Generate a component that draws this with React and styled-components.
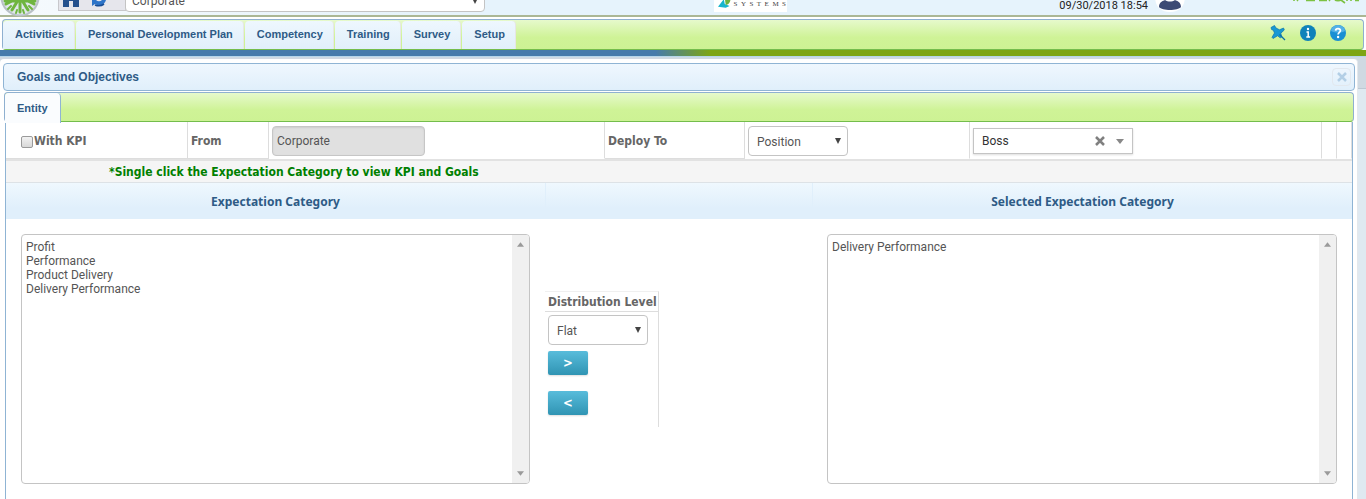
import React from "react";
import styled, { createGlobalStyle } from "styled-components";

const arial = `"Liberation Sans", Arial, sans-serif`;
const bodyFont = `Roboto, Tahoma, sans-serif`;
const headFont = `"Noto Sans", Tahoma, sans-serif`;
const labelFont = `"DejaVu Sans Condensed", "DejaVu Sans", Tahoma, sans-serif`;

const Global = createGlobalStyle`
  * { box-sizing: border-box; }
  body { margin: 0; background: #dfe9f1; font: 12px/16px ${bodyFont}; color: #555; }
  button, select, input { font: inherit; color: inherit; }
  svg { display: block; }
`;

/* ---------- top bar ---------- */
const TopBar = styled.header`
  display: flex; align-items: flex-end; height: 17px; overflow: hidden;
  background: linear-gradient(transparent 15px, #abb795 15px), linear-gradient(90deg, #f6fafd, #e6f3fc 30%);
`;
const TopLeft = styled.div`display: flex; align-items: flex-end; flex: 714;`;
const TopRight = styled.div`display: flex; align-items: flex-end; flex: 579;`;
const Quick = styled.nav`
  display: flex; gap: 12px; align-items: flex-end; width: 68px; height: 26px; margin: 0 0 6px 18px; padding: 0 0 3px 3px;
  background: #e6e6ec; border: 1px solid #c8c8cc;
`;
const IconButton = styled.button`display: flex; padding: 0; border: 0; background: none;`;
const EntityPicker = styled.div`width: 360px; margin: 0 0 5px -1px;`;
const Logo = styled.div`
  display: flex; align-items: flex-end; width: 73px; height: 24px; margin-bottom: 5px; padding: 0 1px 4px 4px; background: #fff;
  font: 7px/8px "Liberation Serif", serif; color: #444;
`;
const Stamp = styled.time`margin: 0 7px 3px auto; font-size: 11px; color: #222;`;
const AvatarSlot = styled.span`margin-bottom: 5px;`;
const Brand = styled.div`margin: 0 6px 12px 107px;`;

/* ---------- menu ---------- */
const greenBar = `
  border: 1px solid #8fb0d0; border-bottom-color: #74bd4c; border-radius: 4px;
  background: linear-gradient(#e6f9cc, #cff397 60%, #cdf294);
`;
const MenuWrap = styled.div`height: 33px; padding: 2px 2px 0; background: #fff;`;
const MenuBar = styled.nav`display: flex; height: 31px; padding: 1px 0 0; ${greenBar}`;
const MenuItem = styled.a`
  margin-right: 1px; padding: 0 10px 0 12px; border-right: 1px solid #e6e6e6; border-radius: 4px 4px 0 0;
  background: linear-gradient(#eef7fe, #e1effa); font: bold 11px/26px ${arial}; color: #2e5b86; text-decoration: none;
`;
const MenuTools = styled.div`display: flex; align-items: flex-start; gap: 14px; margin-left: auto; padding: 4px 17px 0 0;`;
const Stripe = styled.div`
  height: 7px;
  background: linear-gradient(transparent 6px, #b5d6ea 6px), linear-gradient(90deg, #467bab 48%, #7da514 52%);
`;

/* ---------- dialog ---------- */
const Backdrop = styled.div`
  padding: 2px 8px 0 0; background: linear-gradient(#cfd9e2 31px, #bcc8d3 31px, #bcc8d3 32px, #dfe9f1 32px);
`;
const Page = styled.main`
  min-height: calc(100vh - 59px); padding: 4px 2px 0 3px; background: #fff;
  border-right: 1px solid #e4e8ec; border-radius: 4px 4px 0 0;
`;
const Title = styled.div`
  display: flex; align-items: center; justify-content: space-between; height: 28px; padding: 0 3px 0 13px;
  border: 1px solid #8fb4d4; border-radius: 4px; background: linear-gradient(#eff7fe, #e0effb);
`;
const Heading = styled.h1`margin: 0; font: bold 12px/16px ${arial}; color: #2e5b86;`;
const Close = styled.button`
  display: grid; place-items: center; width: 19px; height: 18px; padding: 0;
  border: 1px solid #e2e8ee; border-radius: 4px; background: none;
`;
const TabStrip = styled.div`display: flex; height: 30px; margin: 1px 1px 0; ${greenBar}`;
const Tab = styled.button`
  height: 30px; margin-bottom: -1px; padding: 0 12px; border: 0; border-right: 1px solid #8fb4d4; border-radius: 4px 4px 0 0;
  background: #fafcfe; font: bold 11px/26px ${arial}; color: #2e5b86;
`;
const Body = styled.section`margin: 0 2px; min-height: 376px; border: solid #8fb4d4; border-width: 0 1px;`;

/* ---------- filters ---------- */
const Filters = styled.div`
  display: grid; grid-template-columns: 182fr 81fr 336fr 140fr 225fr 352fr 15fr 15fr; height: 39px; border-bottom: 2px solid #e2e2e2;
`;
const Cell = styled.div`
  display: flex; align-items: center; min-width: 0; padding: 2px 0 0 3px; border-right: 1px solid #ddd;
  border-bottom: 1px solid ${(p) => (p.$line ? "#ddd" : "transparent")};
`;
const Label = styled.label`font: bold 12px/16px ${labelFont}; color: #666;`;
const Check = styled.input`
  appearance: none; width: 12px; height: 12px; margin: 2px 1px 0 15px; margin-left: 12px; border: 1px solid #9a9a9a; border-radius: 2px;
  background: linear-gradient(#f2f2f2, #d8d8d8);
  &:checked { background: #467bab; }
`;
const ReadOnly = styled.input`
  width: 153px; height: 30px; padding: 0 4px; border: 1px solid #c6c6c6; border-radius: 4px; background: #e0e0e0;
  box-shadow: inset 0 1px 2px #ccc;
`;
const Arrowed = styled.span`
  position: relative; display: block; width: ${(p) => (p.$compact ? "100%" : "100px")};
  &::after {
    content: ""; position: absolute; right: 7px; top: ${(p) => (p.$compact ? 8 : 12)}px; pointer-events: none;
    border: 3px solid transparent; border-top: 6px solid #444; border-bottom: 0;
  }
`;
const Select = styled.select`
  appearance: none; display: block; width: 100%; height: ${(p) => (p.$compact ? 22 : 30)}px; padding: ${(p) => (p.$compact ? "0 6px" : "1px 8px 0")};
  border: 1px solid #c4c4c4; border-radius: 4px; background: #fff;
`;
const Combo = styled.div`
  display: flex; align-items: center; gap: 11px; width: 160px; height: 26px; padding: 0 8px;
  border: 1px solid #c4c4c4; background: #fff; box-shadow: 0 1px 2px #ddd;
`;
const ComboInput = styled.input`flex: 1; min-width: 0; padding: 0; border: 0; outline: 0; background: none; color: #333;`;
const Note = styled.p`
  margin: 0; height: 22px; padding: 1px 0 0 103px; border-bottom: 1px solid #dde2e6; background: #f5f5f5;
  font: bold 12px/21px ${labelFont}; color: #008000;
`;

/* ---------- lists ---------- */
const Columns = styled.div`display: grid; grid-template-columns: 539fr 267fr 540fr;`;
const ColHead = styled.h2`
  margin: 0; height: 36px; padding-top: 1px; text-align: center; background: linear-gradient(#eff8fe, #e0effb 70%);
  font: bold 12px/35px ${headFont}; color: #2e5b86;
  & + & { border-left: 1px solid #e0effb; }
`;
const ListBox = styled.div`position: relative; margin: 15px;`;
const List = styled.select`
  display: block; width: 100%; height: 250px; padding: 5px 0; border: 1px solid #c4c4c4; border-radius: 4px;
  background: #fff; overflow-y: auto;
  option { min-height: 14px; padding: 0 4px; }
`;
const Rail = styled.div`
  position: absolute; top: 1px; right: 1px; bottom: 1px; display: flex; flex-direction: column; justify-content: space-between;
  width: 17px; padding: 7px 5px; background: #f0f0f0; border-radius: 0 3px 3px 0;
`;
const Level = styled.form`
  display: flex; flex-direction: column; align-self: center; width: 114px; height: 136px;
  border: 1px solid #ddd; border-width: 1px 1px 0 0; border-top-color: #f0f0f0;
`;
const LevelHead = styled.div`height: 20px; padding: 2px 3px 0; border-bottom: 1px solid #ddd; white-space: nowrap;`;
const LevelBody = styled.div`padding: 3px 3px 0;`;
const Move = styled.button`
  display: block; width: 40px; height: 24px; margin: ${(p) => p.$gap}px 0 0; padding: 0; border: 0; border-radius: 2px;
  background: linear-gradient(#58bcdb, #3094b3); box-shadow: 0 1px 2px #ddd; color: #fff; font: bold 13px/24px ${labelFont};
`;

/* ---------- drawings ---------- */
const Emblem = () => (
  <svg width="40" height="17" viewBox="0 0 40 17" aria-hidden="true">
    <circle cx="20" cy="-3" r="19.5" fill="#b9c1c6" />
    <circle cx="20" cy="-3" r="17.5" fill="#dfe6ea" />
    <g stroke="#6fb53f" strokeWidth="3" strokeLinecap="round" fill="none">
      <path d="M20-3V12M20-3L12 10M20-3L28 10M20-3L6 4M20-3L34 4M5 1H35" />
      <path d="M16 13l1-3M24 13l-1-3M8 9l3-3M32 9l-3-3" strokeWidth="2" />
    </g>
  </svg>
);
const Home = () => (
  <svg width="18" height="18" viewBox="0 0 18 18"><path d="M0 8L9 0l9 8h-1v10h-6v-6H7v6H1V8z" fill="#24508c" /></svg>
);
const Refresh = () => (
  <svg width="15" height="17" viewBox="0 0 15 17">
    <path d="M2 7a6 6 0 0 1 10-1l2-2v6H8l2-2a4 4 0 0 0-5-1z" fill="#4b93dc" />
    <path d="M0 8h6L4 10a4 4 0 0 0 6 0h4a7 7 0 0 1-11 4l-3 2z" fill="#2d74c8" />
    <path d="M3 15q5 2 9-1" stroke="#174d96" strokeWidth="1.6" fill="none" />
  </svg>
);
const Avatar = () => (
  <svg width="30" height="12" viewBox="0 0 30 12">
    <path d="M0-4h30C30 7 24 12 15 12S0 7 0-4z" fill="#fff" />
    <path d="M4 7C4 2 8 1 10 0c3 2 7 2 10 0 2 1 6 2 6 7-3 4-19 4-22 0z" fill="#3c4a74" />
  </svg>
);
const Pin = () => (
  <svg width="16" height="16" viewBox="0 0 16 16">
    <path d="M1 2.5L4.5.5 6 3l3.5 1.8L13.500 3l.8 2-3.500 3.200 1 3.800-1.600.8-2.600-2L3 13.500l-1-1.200L4.500 8 3.300 5.200 1.600 4.600z" fill="#1798d4" stroke="#0b72aa" strokeWidth=".7" />
    <path d="M9.500 9.500l5.500 5.500" stroke="#0a6fa6" strokeWidth="1.200" />
  </svg>
);
const Info = () => (
  <svg width="16" height="16" viewBox="0 0 16 16">
    <circle cx="8" cy="8" r="8" fill="#0f82ba" /><circle cx="8" cy="4" r="1.2" fill="#fff" />
    <path d="M6.500 7H8.200v5M6.300 12h3.800" stroke="#fff" strokeWidth="1.500" fill="none" />
  </svg>
);
const Help = () => (
  <svg width="16" height="16" viewBox="0 0 16 16">
    <circle cx="8" cy="8" r="8" fill="#1a8fd3" /><path d="M1 6a7 6 0 0 1 14 0c-4 2-9 2-14 0z" fill="#52b0e6" />
    <path d="M5.600 5.600C5.800 2.900 10.600 3 10.400 5.800 10.300 7.400 8.100 7.500 8.100 9.600" stroke="#fff" strokeWidth="1.800" fill="none" />
    <circle cx="8.100" cy="12" r="1.200" fill="#fff" />
  </svg>
);
const Cross = ({ color }) => (
  <svg width="10" height="10" viewBox="0 0 10 10"><path d="M1 1l8 8M9 1l-8 8" stroke={color} strokeWidth="2.500" /></svg>
);
const Caret = ({ up, w = 7, color = "#9a9a9a" }) => (
  <svg width={w} height="5" viewBox="0 0 8 5"><path d={up ? "M0 5L4 0l4 5z" : "M0 0h8L4 5z"} fill={color} /></svg>
);

const MENU = ["Activities", "Personal Development Plan", "Competency", "Training", "Survey", "Setup"];

function CategoryList({ label, items }) {
  return (
    <ListBox>
      <List multiple aria-label={label}>{items.map((i) => <option key={i}>{i}</option>)}</List>
      <Rail aria-hidden="true"><Caret up /><Caret /></Rail>
    </ListBox>
  );
}

export default function App() {
  return (
    <>
      <Global />
      <TopBar>
        <TopLeft>
          <Emblem />
          <Quick>
            <IconButton aria-label="Home"><Home /></IconButton>
            <IconButton aria-label="Refresh"><Refresh /></IconButton>
          </Quick>
          <EntityPicker>
            <Arrowed $compact><Select $compact aria-label="Entity"><option>Corporate</option></Select></Arrowed>
          </EntityPicker>
        </TopLeft>
        <Logo>
          <svg width="16" height="10" viewBox="0 0 16 10" aria-hidden="true">
            <path d="M0 9L6 1l1 5 5 2-4 2z" fill="#18b5cc" /><path d="M7 0h6c0 4-2 7-5 7z" fill="#6cb33e" />
          </svg>
          <span>S&nbsp;&nbsp;Y&nbsp;&nbsp;S&nbsp;&nbsp;T&nbsp;&nbsp;E&nbsp;&nbsp;M&nbsp;&nbsp;S</span>
        </Logo>
        <TopRight>
          <Stamp>09/30/2018 18:54</Stamp>
          <AvatarSlot><Avatar /></AvatarSlot>
          <Brand>
            <svg width="68" height="5" viewBox="0 0 68 5" aria-hidden="true">
              <path d="M2 0v1M6 0l-1 1M14 .5h9M27 .5h8M38 0l-1 1M43 0c1 1 5 1 6 0l4 3M55 0v1M59 0v1M63 .5h4" stroke="#7cc142" strokeWidth="1.600" fill="none" />
            </svg>
          </Brand>
        </TopRight>
      </TopBar>
      <MenuWrap>
        <MenuBar>
          {MENU.map((m) => <MenuItem href="#" key={m}>{m}</MenuItem>)}
          <MenuTools>
            <IconButton aria-label="Pin"><Pin /></IconButton>
            <IconButton aria-label="Information"><Info /></IconButton>
            <IconButton aria-label="Help"><Help /></IconButton>
          </MenuTools>
        </MenuBar>
      </MenuWrap>
      <Stripe />
      <Backdrop>
        <Page>
          <Title>
            <Heading>Goals and Objectives</Heading>
            <Close aria-label="Close"><Cross color="#b3cfe6" /></Close>
          </Title>
          <TabStrip><Tab>Entity</Tab></TabStrip>
          <Body>
            <Filters>
              <Cell $line><Check id="kpi" type="checkbox" /><Label htmlFor="kpi">With KPI</Label></Cell>
              <Cell $line><Label htmlFor="from">From</Label></Cell>
              <Cell><ReadOnly id="from" readOnly value="Corporate" /></Cell>
              <Cell $line><Label htmlFor="deploy">Deploy To</Label></Cell>
              <Cell><Arrowed><Select id="deploy"><option>Position</option></Select></Arrowed></Cell>
              <Cell>
                <Combo>
                  <ComboInput aria-label="Position holder" defaultValue="Boss" />
                  <IconButton aria-label="Clear"><Cross color="#808080" /></IconButton>
                  <IconButton aria-label="Open list"><Caret w={8} color="#888" /></IconButton>
                </Combo>
              </Cell>
              <Cell />
              <Cell />
            </Filters>
            <Note>*Single click the Expectation Category to view KPI and Goals</Note>
            <Columns>
              <ColHead>Expectation Category</ColHead>
              <ColHead />
              <ColHead>Selected Expectation Category</ColHead>
              <CategoryList label="Expectation Category" items={["Profit", "Performance", "Product Delivery", "Delivery Performance"]} />
              <Level>
                <LevelHead><Label htmlFor="level">Distribution Level</Label></LevelHead>
                <LevelBody>
                  <Arrowed><Select id="level"><option>Flat</option></Select></Arrowed>
                  <Move type="button" $gap={6}>&gt;</Move>
                  <Move type="button" $gap={16}>&lt;</Move>
                </LevelBody>
              </Level>
              <CategoryList label="Selected Expectation Category" items={["Delivery Performance"]} />
            </Columns>
          </Body>
        </Page>
      </Backdrop>
    </>
  );
}
